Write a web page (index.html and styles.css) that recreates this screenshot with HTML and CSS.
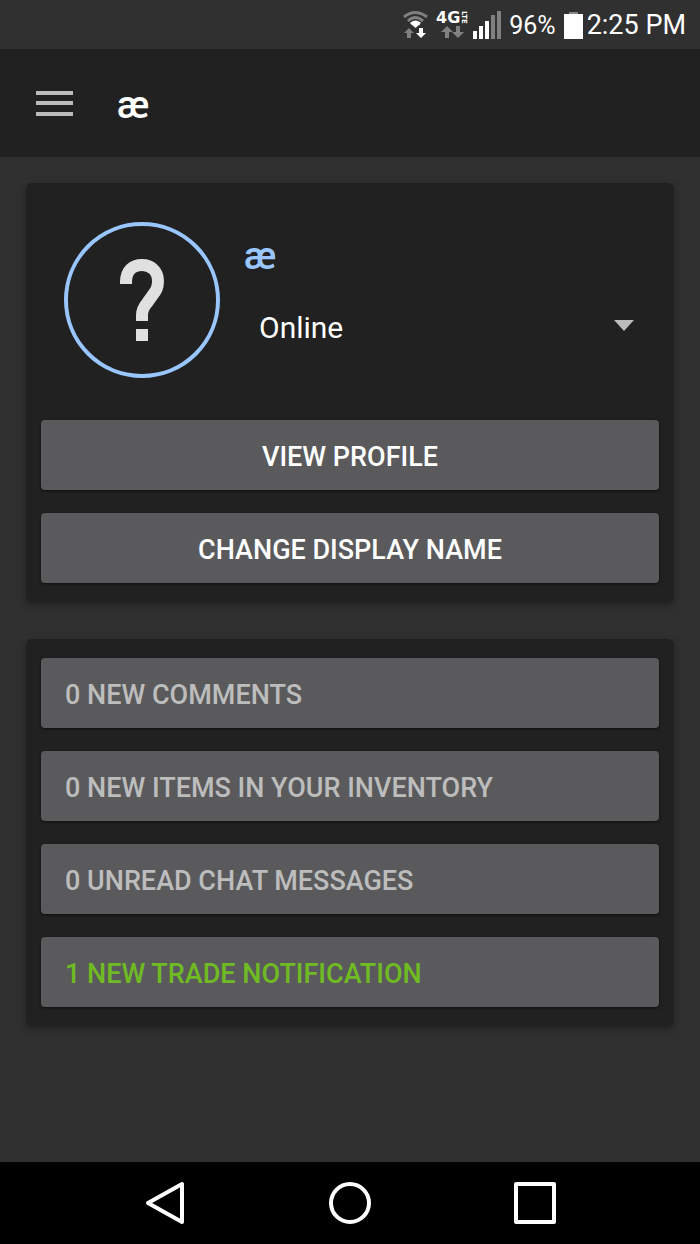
FILE: index.html
```html
<!DOCTYPE html>
<html lang="en">
<head>
<meta charset="utf-8">
<meta name="viewport" content="width=device-width">
<title>æ</title>
<link rel="stylesheet" href="styles.css">
</head>
<body>
<div class="status-bar">
  <svg class="signals" width="100" height="32" viewBox="0 0 100 32" aria-hidden="true">
    <g fill="none" stroke-width="3">
      <path stroke="#808080" d="M1 8Q12-1 24 8M5 12Q12 5 20 12"/>
      <path stroke="#fff" d="M8 15Q12 11 17 15"/>
    </g>
    <path fill="#fff" d="M8 15l4-2 5 2-4.500 4z"/>
    <path fill="#808080" d="M6 19l5 5H8v5H4v-5H1z"/>
    <path fill="#fff" d="M18 29l5-5h-3v-5h-4v5h-3z"/>
    <text class="network" x="33" y="14">4G</text>
    <text class="network-type" transform="translate(59 2) rotate(90)">LTE</text>
    <g fill="#808080">
      <path d="M44 17l6 6h-4v6h-4v-6h-4z"/>
      <path d="M55 29l6-6h-4v-6h-4v6h-4z"/>
      <path d="M88 6h4v24h-4zM94 2h4v28h-4z"/>
    </g>
    <path fill="#fff" d="M70 22h4v8h-4zM76 17h4v13h-4zM82 12h4v18h-4z"/>
  </svg>
  <span class="percent">96%</span>
  <svg width="19" height="27" viewBox="0 0 19 27" aria-hidden="true"><path fill="#888" d="M5 0h9v3H5z"/><path fill="#fff" d="M0 2h19v25H0z"/></svg>
  <span>2:25 PM</span>
</div>
<header class="app-bar">
  <button class="menu-button" aria-label="Open menu"><svg width="37" height="25" viewBox="0 0 37 25"><path fill="#bcbcbc" d="M0 0h37v4H0zM0 10h37v4H0zM0 21h37v4H0z"/></svg></button>
  <h1 class="title">æ</h1>
</header>
<main class="content">
  <section class="card">
    <div class="profile">
      <svg class="avatar" width="156" height="156" viewBox="0 0 156 156" role="img" aria-label="Unknown user">
        <circle cx="78" cy="78" r="76" stroke="#99c6ff" stroke-width="4"/>
        <path stroke="#e0e0e0" stroke-width="12" d="M62 62V60C62 48 69 43 78 43S94 49 94 59C94 66 92 69 88 74L83 81Q78 87 78 93V99M78 107v12"/>
      </svg>
      <div class="identity">
        <h2 class="name">æ</h2>
        <div class="status-field">
          <select class="status-select" aria-label="Status"><option>Online</option><option>Offline</option></select>
          <svg class="arrow" width="20" height="12" viewBox="0 0 20 12" aria-hidden="true"><path fill="#bcbcbc" d="M0 0h20L10 11z"/></svg>
        </div>
      </div>
    </div>
    <div class="actions">
      <button class="button">VIEW PROFILE</button>
      <button class="button">CHANGE DISPLAY NAME</button>
    </div>
  </section>
  <section class="card">
    <div class="actions">
      <button class="button notice">0 NEW COMMENTS</button>
      <button class="button notice">0 NEW ITEMS IN YOUR INVENTORY</button>
      <button class="button notice">0 UNREAD CHAT MESSAGES</button>
      <button class="button notice active">1 NEW TRADE NOTIFICATION</button>
    </div>
  </section>
</main>
<nav class="nav-bar">
  <button class="nav-button" aria-label="Back"><svg width="44" height="44" viewBox="0 0 44 44"><path d="M39 3v38L5 22z"/></svg></button>
  <button class="nav-button" aria-label="Home"><svg width="44" height="44" viewBox="0 0 44 44"><circle cx="22" cy="22" r="19"/></svg></button>
  <button class="nav-button" aria-label="Recent apps"><svg width="44" height="44" viewBox="0 0 44 44"><path d="M3 3h38v38H3z"/></svg></button>
</nav>
</body>
</html>
```
FILE: styles.css
```css
* { box-sizing: border-box; }
body {
  margin: 0;
  min-height: 100vh;
  display: flex;
  flex-direction: column;
  background: #303030;
  color: #fff;
  font-family: Roboto, sans-serif;
}
svg { display: block; flex: none; }
button { border: 0; padding: 0; font: inherit; color: inherit; background: none; }
.status-bar {
  display: flex;
  justify-content: flex-end;
  align-items: center;
  height: 49px;
  padding: 1px 14px 0 0;
  font-size: 27px;
  gap: 4px;
}
.percent { margin: 0 4px 0 2px; font-size: 25px; }
.network { font: bold 16px "DejaVu Sans", sans-serif; fill: #fff; }
.network-type { font: bold 7px "DejaVu Sans", sans-serif; fill: #fff; }
.app-bar {
  display: flex;
  align-items: center;
  gap: 44px;
  height: 108px;
  padding: 0 36px;
  background: #212121;
}
.title, .name { margin: 0; font-size: 38px; line-height: 44px; font-weight: 500; }
.title { padding-top: 4px; }
.content {
  flex: 1;
  display: flex;
  flex-direction: column;
  gap: 37px;
  padding: 26px;
}
.card {
  padding: 19px 15px;
  border-radius: 6px;
  background: #212121;
  box-shadow: 0 3px 8px rgba(0, 0, 0, 0.35);
}
.profile { display: flex; gap: 24px; padding: 20px 24px 42px 23px; }
.avatar { fill: none; }
.identity { flex: 1; padding-top: 12px; }
.name { color: #99c6ff; }
.status-field { position: relative; margin-top: 24px; }
.status-select {
  width: 100%;
  height: 50px;
  padding: 0 48px 0 15px;
  border: 0;
  appearance: none;
  background: transparent;
  color: #fff;
  font: 30px Roboto, sans-serif;
}
.arrow { position: absolute; right: 1px; top: 18px; pointer-events: none; }
.actions { display: grid; gap: 23px; }
.button {
  height: 70px;
  padding: 4px 24px 0;
  border-radius: 4px;
  background: #5a5a5c;
  box-shadow: 0 1px 3px rgba(0, 0, 0, 0.6);
  font-size: 27px;
  font-weight: 500;
}
.notice { text-align: left; color: #bdbdbd; }
.active { color: #70ba24; }
.nav-bar {
  display: flex;
  justify-content: center;
  height: 82px;
  background: #000;
}
.nav-button { width: 185px; display: grid; place-items: center; }
.nav-button svg { fill: none; stroke: #fff; stroke-width: 4; stroke-linejoin: round; }
```
